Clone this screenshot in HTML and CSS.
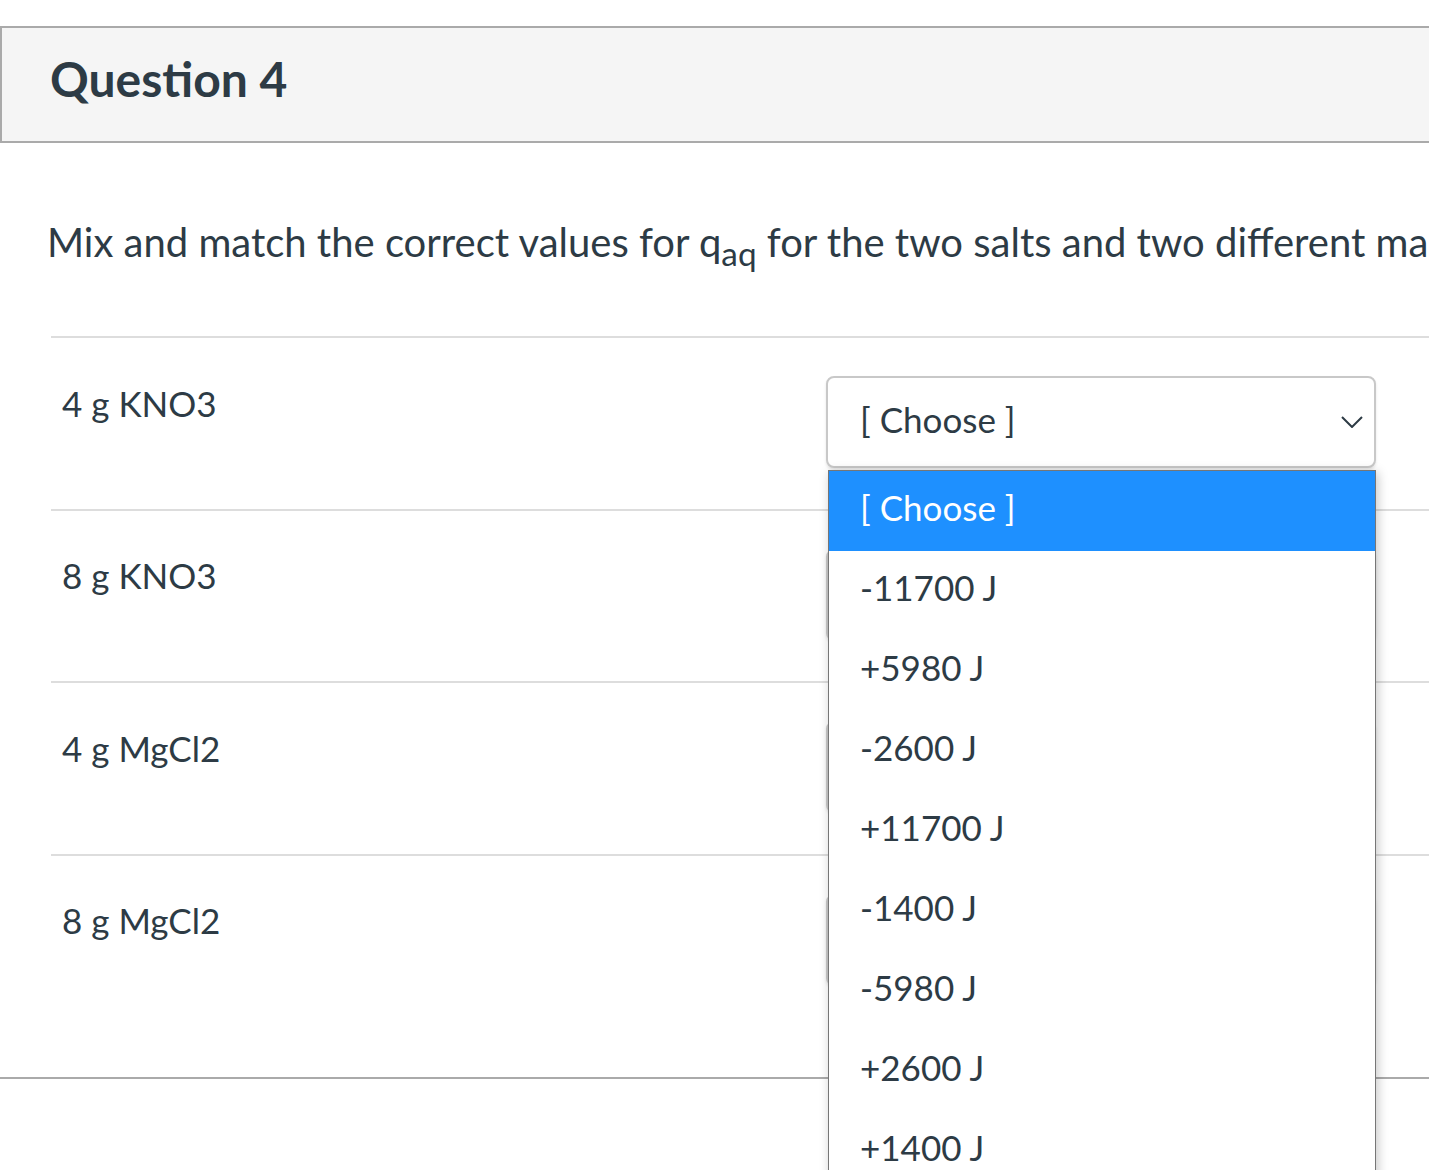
FILE: index.html
```html
<!DOCTYPE html>
<html lang="en">
<head>
<meta charset="utf-8">
<title>Question 4</title>
<link rel="stylesheet" href="styles.css">
</head>
<body>
<div class="question">
  <div class="q-header">
    <h2 class="q-title">Question 4</h2>
  </div>
  <div class="q-body">
    <p class="q-text">Mix and match the correct values for q<sub>aq</sub> for the two salts and two different masses.</p>
    <div class="answers">
      <div class="answer">
        <div class="label">4 g KNO3</div>
        <div class="select-wrap">
          <div class="select">
            <span>[ Choose ]</span>
            <svg class="chev" width="22" height="12" viewBox="0 0 22 12"><polyline points="1,1 11,11 21,1" fill="none" stroke="#2d3b45" stroke-width="2"/></svg>
          </div>
          <ul class="dropdown">
            <li class="opt active">[ Choose ]</li>
            <li class="opt">-11700 J</li>
            <li class="opt">+5980 J</li>
            <li class="opt">-2600 J</li>
            <li class="opt">+11700 J</li>
            <li class="opt">-1400 J</li>
            <li class="opt">-5980 J</li>
            <li class="opt">+2600 J</li>
            <li class="opt">+1400 J</li>
          </ul>
        </div>
      </div>
      <div class="answer">
        <div class="label">8 g KNO3</div>
        <div class="select-wrap">
          <div class="select">
            <span>[ Choose ]</span>
            <svg class="chev" width="22" height="12" viewBox="0 0 22 12"><polyline points="1,1 11,11 21,1" fill="none" stroke="#2d3b45" stroke-width="2"/></svg>
          </div>
        </div>
      </div>
      <div class="answer">
        <div class="label">4 g MgCl2</div>
        <div class="select-wrap">
          <div class="select">
            <span>[ Choose ]</span>
            <svg class="chev" width="22" height="12" viewBox="0 0 22 12"><polyline points="1,1 11,11 21,1" fill="none" stroke="#2d3b45" stroke-width="2"/></svg>
          </div>
        </div>
      </div>
      <div class="answer">
        <div class="label">8 g MgCl2</div>
        <div class="select-wrap">
          <div class="select">
            <span>[ Choose ]</span>
            <svg class="chev" width="22" height="12" viewBox="0 0 22 12"><polyline points="1,1 11,11 21,1" fill="none" stroke="#2d3b45" stroke-width="2"/></svg>
          </div>
        </div>
      </div>
    </div>
  </div>
</div>
</body>
</html>
```
FILE: styles.css
```css
html, body {
  margin: 0;
  padding: 0;
  height: 1170px;
  overflow: hidden;
  background: #fff;
}
body {
  font-family: Lato, "Open Sans", sans-serif;
  color: #2d3b45;
}
.question {
  margin-top: 26px;
  width: 1800px;
  border-top: 2px solid #aaa;
  border-bottom: 2px solid #aaa;
}
.q-header {
  box-sizing: border-box;
  height: 115px;
  background: #f5f5f5;
  border-left: 2px solid #aaa;
  border-bottom: 2px solid #aaa;
  padding: 21px 0 0 48px;
}
.q-title {
  margin: 0;
  font-size: 48px;
  line-height: 60px;
  font-weight: 700;
}
.q-body {
  padding: 0 0 0 51px;
}
.q-text {
  margin: 75px 0 0 -4px;
  font-size: 40px;
  line-height: 48px;
  white-space: nowrap;
}
.q-text sub {
  line-height: 0;
}
.answers {
  margin-top: 70px;
  padding-bottom: 50.5px;
}
.answer {
  box-sizing: border-box;
  height: 172.5px;
  border-top: 2px solid #ddd;
  display: flex;
  padding-top: 38px;
}
.label {
  flex: 0 0 775px;
  box-sizing: border-box;
  padding: 5.5px 0 0 11px;
  font-size: 35px;
  line-height: 42px;
}
.select-wrap {
  position: relative;
  width: 550px;
}
.select {
  box-sizing: border-box;
  height: 92px;
  border: 2px solid #c8c8c8;
  border-radius: 8px;
  background: #fff;
  display: flex;
  align-items: center;
  justify-content: space-between;
  padding: 0 11px 6px 32px;
  font-size: 35px;
  box-shadow: 0 2px 3px rgba(0,0,0,0.1);
}
.chev {
  margin-top: 6px;
}
.dropdown {
  position: absolute;
  top: 94px;
  left: 2px;
  width: 548px;
  box-sizing: border-box;
  margin: 0;
  padding: 0;
  list-style: none;
  background: #fff;
  border: 1px solid #767676;
  box-shadow: 2px 2px 10px rgba(0,0,0,0.22);
  z-index: 10;
}
.opt {
  box-sizing: border-box;
  height: 80px;
  padding: 0 0 7px 31px;
  font-size: 35px;
  line-height: 73px;
  color: #2d3b45;
}
.opt.active {
  background: #1e90ff;
  color: #fff;
}
```
